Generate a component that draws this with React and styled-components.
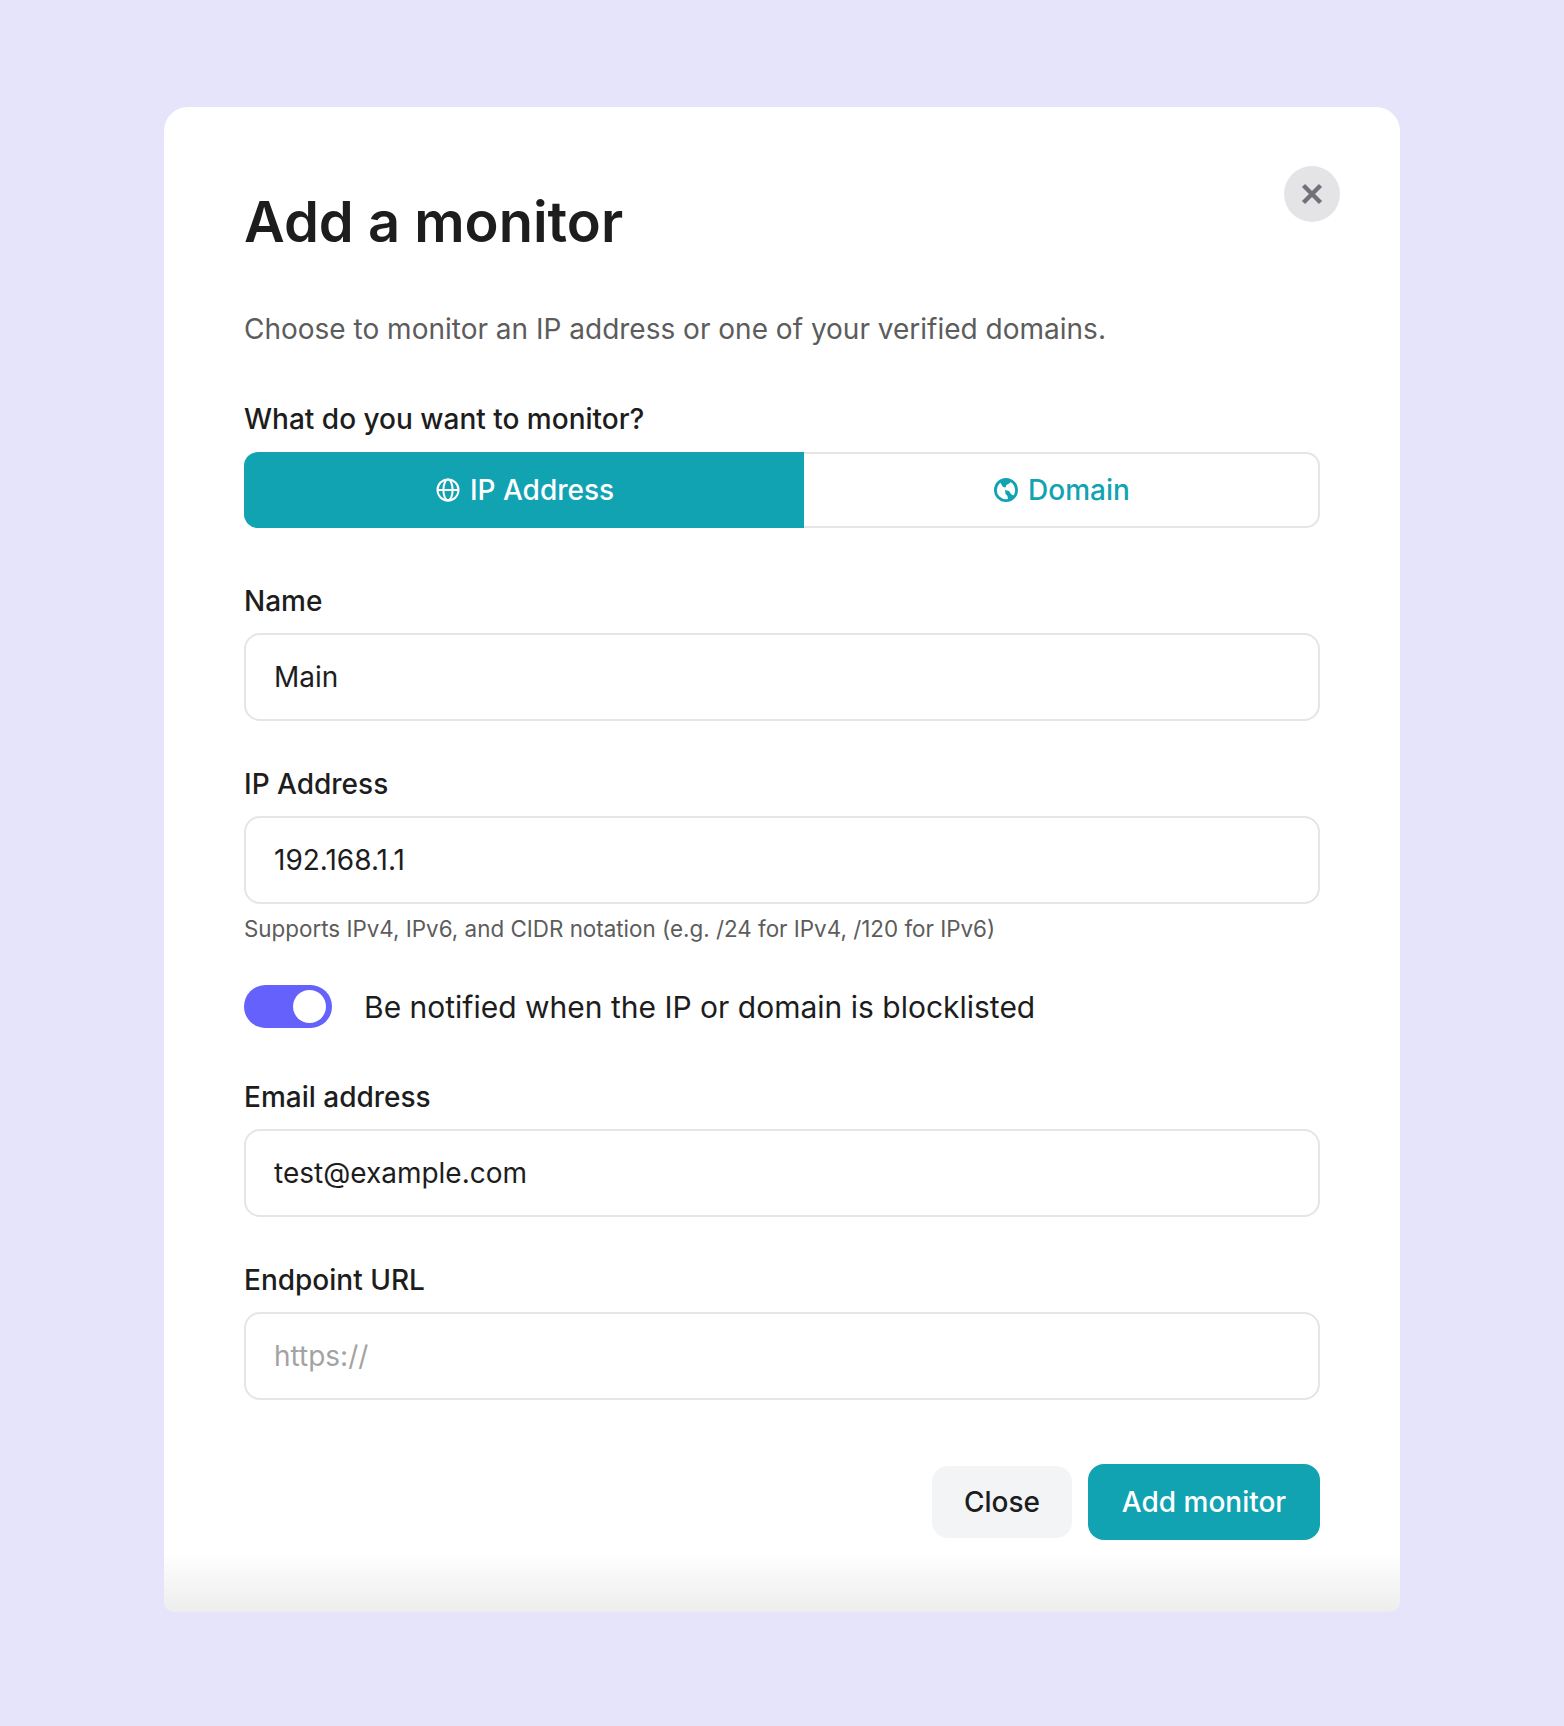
import React from "react"
import styled, { createGlobalStyle } from "styled-components"

const GlobalStyle = createGlobalStyle`
    * {
        box-sizing: border-box;
    }

    body {
        margin: 0;
        background: #E6E4FA;
        font-family: Inter, "Liberation Sans", sans-serif;
    }
`

function GlobeIcon() {
    return (
        <svg width="24" height="24" viewBox="0 0 24 24" fill="none" stroke="currentColor" strokeWidth="2">
            <circle cx="12" cy="12" r="10.5" />
            <ellipse cx="12" cy="12" rx="4.6" ry="10.5" />
            <path d="M1.5 12h21" />
        </svg>
    )
}

function WorldIcon() {
    return (
        <svg width="24" height="24" viewBox="0 0 24 24" fill="currentColor">
            <circle cx="12" cy="12" r="10.6" fill="none" stroke="currentColor" strokeWidth="2.8" />
            <path d="M7 2L17 2L16 5L12.5 7L11.5 9.5L9 9L6.5 5Z" />
            <path d="M11 12L15 13L17 16L20 18L16 22L14 22L13.5 18L11.5 16Z" />
        </svg>
    )
}

export default function App() {
    return (
        <>
            <GlobalStyle />
            <Page>
                <Card>
                    <CloseIcon aria-label="Close">
                        <svg width="24" height="24" viewBox="0 0 24 24" fill="none" stroke="currentColor" strokeWidth="4.4">
                            <path d="M3.5 3.5l17 17M20.5 3.5l-17 17" />
                        </svg>
                    </CloseIcon>
                    <Title>Add a monitor</Title>
                    <Subtitle>Choose to monitor an IP address or one of your verified domains.</Subtitle>

                    <Label>What do you want to monitor?</Label>
                    <Tabs>
                        <Tab $active>
                            <GlobeIcon />
                            IP Address
                        </Tab>
                        <Tab>
                            <WorldIcon />
                            Domain
                        </Tab>
                    </Tabs>

                    <FirstField>
                        <Label>Name</Label>
                        <Input defaultValue="Main" />
                    </FirstField>

                    <Field>
                        <Label>IP Address</Label>
                        <Input defaultValue="192.168.1.1" />
                        <Hint>Supports IPv4, IPv6, and CIDR notation (e.g. /24 for IPv4, /120 for IPv6)</Hint>
                    </Field>

                    <ToggleRow>
                        <Toggle />
                        <ToggleText>Be notified when the IP or domain is blocklisted</ToggleText>
                    </ToggleRow>

                    <EmailField>
                        <Label>Email address</Label>
                        <Input defaultValue="test@example.com" />
                    </EmailField>

                    <Field>
                        <Label>Endpoint URL</Label>
                        <Input placeholder="https://" />
                    </Field>

                    <Actions>
                        <SecondaryButton>Close</SecondaryButton>
                        <PrimaryButton>Add monitor</PrimaryButton>
                    </Actions>
                </Card>
            </Page>
        </>
    )
}

const Page = styled.div`
    min-height: 1726px;
    padding: 107px 164px 114px;
`

const Card = styled.div`
    position: relative;
    height: 1505px;
    padding: 91px 80px 0;
    background: linear-gradient(to bottom, #FFFFFF 1445px, #EDEDED 100%);
    border-radius: 24px 24px 10px 10px;
`

const CloseIcon = styled.button`
    position: absolute;
    top: 59px;
    right: 60px;
    width: 56px;
    height: 56px;
    padding: 0;
    display: flex;
    align-items: center;
    justify-content: center;
    border: none;
    border-radius: 50%;
    background: #E4E4E7;
    color: #71717A;
`

const Title = styled.h1`
    margin: 0;
    font-size: 56px;
    font-weight: 600;
    line-height: 48px;
    color: #1D1D1D;
`

const Subtitle = styled.p`
    margin: 65px 0 0;
    font-size: 28px;
    font-weight: 400;
    line-height: 36px;
    color: #5C5C5C;
`

const Label = styled.label`
    display: block;
    margin-top: 54px;
    font-size: 28px;
    font-weight: 500;
    line-height: 36px;
    color: #1D1D1D;
`

const Tabs = styled.div`
    display: grid;
    grid-template-columns: 560px 1fr;
    height: 76px;
    margin-top: 15px;
`

const Tab = styled.div`
    display: flex;
    align-items: center;
    justify-content: center;
    gap: 10px;
    padding-left: 2px;
    font-size: 28px;
    font-weight: 500;
    color: ${props => props.$active ? "#FFFFFF" : "#12A3B3"};
    background: ${props => props.$active ? "#12A3B3" : "#FFFFFF"};
    border: ${props => props.$active ? "none" : "2px solid #E5E5E5"};
    border-left: none;
    border-radius: ${props => props.$active ? "14px 0 0 14px" : "0 14px 14px 0"};
`

const Field = styled.div`
    ${Label} {
        margin-top: 45px;
    }
`

const FirstField = styled(Field)`
    ${Label} {
        margin-top: 55px;
    }
`

const EmailField = styled(Field)`
    ${Label} {
        margin-top: 0;
    }
`

const Input = styled.input`
    display: block;
    width: 100%;
    height: 88px;
    margin-top: 14px;
    padding: 0 28px;
    font-family: inherit;
    font-size: 28px;
    color: #1D1D1D;
    background: #FFFFFF;
    border: 2px solid #E5E5E5;
    border-radius: 16px;
    outline: none;

    &::placeholder {
        color: #A3A3A3;
    }
`

const Hint = styled.p`
    margin: 10px 0 0;
    font-size: 22.4px;
    line-height: 30px;
    color: #5C5C5C;
`

const ToggleRow = styled.div`
    display: flex;
    align-items: center;
    gap: 32px;
    margin: 41px 0 51px;
`

const Toggle = styled.div`
    position: relative;
    width: 88px;
    height: 43px;
    border-radius: 22px;
    background: #6461FC;

    &::after {
        content: "";
        position: absolute;
        top: 5px;
        right: 6px;
        width: 33px;
        height: 33px;
        border-radius: 50%;
        background: #FFFFFF;
    }
`

const ToggleText = styled.span`
    font-size: 30px;
    font-weight: 400;
    color: #1D1D1D;
`

const Actions = styled.div`
    display: flex;
    align-items: center;
    justify-content: flex-end;
    gap: 16px;
    margin-top: 64px;
`

const SecondaryButton = styled.button`
    width: 140px;
    height: 72px;
    font-family: inherit;
    font-size: 28px;
    font-weight: 500;
    color: #1D1D1D;
    background: #F3F4F6;
    border: none;
    border-radius: 16px;
`

const PrimaryButton = styled.button`
    width: 232px;
    height: 76px;
    font-family: inherit;
    font-size: 28px;
    font-weight: 500;
    color: #FFFFFF;
    background: #12A3B3;
    border: none;
    border-radius: 16px;
`
